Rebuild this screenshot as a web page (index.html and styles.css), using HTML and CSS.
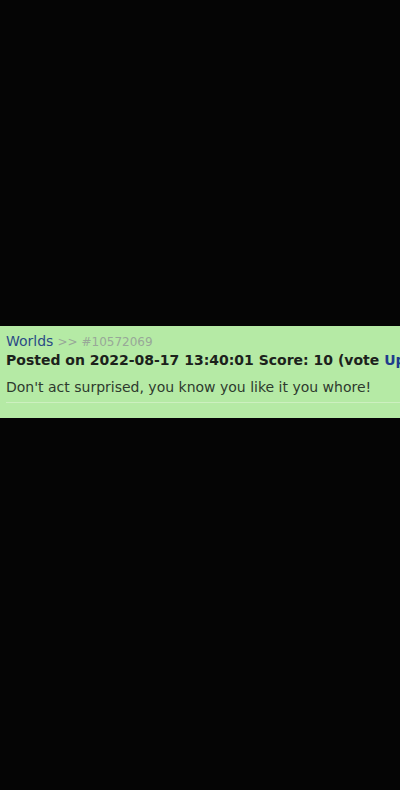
FILE: index.html
```html
<!DOCTYPE html>
<html>
<head>
<meta charset="utf-8">
<link rel="stylesheet" href="styles.css">
</head>
<body>
<div class="screen">
  <div class="post">
    <div class="head">
      <a class="tag">Worlds</a> <span class="ref">&gt;&gt; #10572069</span>
    </div>
    <div class="meta">Posted on 2022-08-17 13:40:01 Score: 10 (vote <a class="vote">Up</a>)</div>
    <div class="body">Don't act surprised, you know you like it you whore!</div>
    <div class="foot"></div>
  </div>
</div>
</body>
</html>
```
FILE: styles.css
```css
html, body {
  margin: 0;
  padding: 0;
  background: #050505;
}
.screen {
  width: 400px;
  height: 790px;
  padding-top: 326px;
  box-sizing: border-box;
  overflow: hidden;
}
.post {
  background: #b5eaa5;
  padding: 7px 0 0 6px;
  height: 92px;
  box-sizing: border-box;
  font-family: "DejaVu Sans", Verdana, sans-serif;
  white-space: nowrap;
  overflow: hidden;
}
.head {
  font-size: 13px;
  line-height: 17px;
}
.tag {
  color: #2b4a86;
  font-size: 14px;
}
.ref {
  color: #98a898;
  font-size: 12px;
}
.meta {
  font-weight: bold;
  font-size: 14px;
  line-height: 18px;
  color: #1c221c;
}
.vote {
  color: #1f3c8c;
}
.body {
  margin-top: 9px;
  font-size: 14px;
  line-height: 18px;
  color: #2e3a2e;
}
.foot {
  margin-top: 6px;
  height: 1px;
  background: #cdf0c0;
}
```
